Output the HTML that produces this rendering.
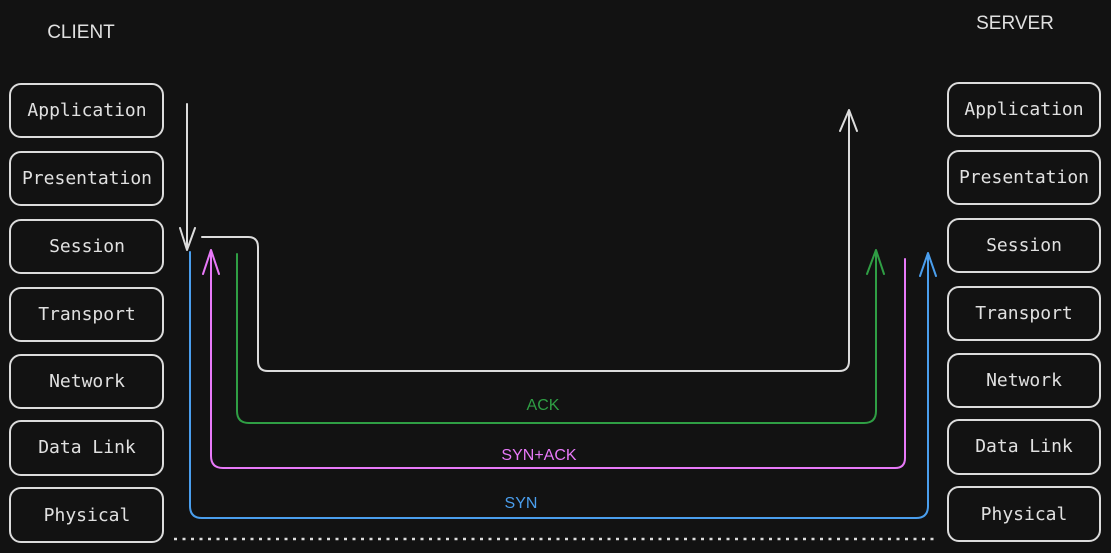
<!DOCTYPE html><html><head><style>body{margin:0;background:#121212}svg{display:block}text{font-family:"DejaVu Sans Mono","Liberation Mono",monospace}</style></head><body>
<svg width="1111" height="553" viewBox="0 0 1111 553" xmlns="http://www.w3.org/2000/svg">
<rect width="1111" height="553" fill="#121212"/>
<g font-size="19" fill="#e0e0e0">
<text x="81" y="38" text-anchor="middle" style="font-family:'Liberation Sans',sans-serif">CLIENT</text>
<text x="1015" y="29" text-anchor="middle" style="font-family:'Liberation Sans',sans-serif">SERVER</text>
</g>
<g fill="none" stroke="#dcdcdc" stroke-width="2">
<rect x="10" y="84" width="153" height="53" rx="11"/>
<rect x="10" y="152" width="153" height="53" rx="11"/>
<rect x="10" y="220" width="153" height="53" rx="11"/>
<rect x="10" y="288" width="153" height="53" rx="11"/>
<rect x="10" y="355" width="153" height="53" rx="11"/>
<rect x="10" y="421" width="153" height="54" rx="11"/>
<rect x="10" y="488" width="153" height="54" rx="11"/>
<rect x="948" y="83" width="152" height="53" rx="11"/>
<rect x="948" y="151" width="152" height="53" rx="11"/>
<rect x="948" y="219" width="152" height="53" rx="11"/>
<rect x="948" y="287" width="152" height="53" rx="11"/>
<rect x="948" y="354" width="152" height="53" rx="11"/>
<rect x="948" y="420" width="152" height="54" rx="11"/>
<rect x="948" y="487" width="152" height="54" rx="11"/>
</g>
<g font-size="18" fill="#e0e0e0" text-anchor="middle">
<text x="87" y="116">Application</text><text x="87" y="184">Presentation</text><text x="87" y="252">Session</text><text x="87" y="320">Transport</text><text x="87" y="387">Network</text><text x="87" y="453">Data Link</text><text x="87" y="521">Physical</text>
<text x="1024" y="115">Application</text><text x="1024" y="183">Presentation</text><text x="1024" y="251">Session</text><text x="1024" y="319">Transport</text><text x="1024" y="386">Network</text><text x="1024" y="452">Data Link</text><text x="1024" y="520">Physical</text>
</g>
<g fill="none" stroke-width="2" stroke-linecap="round" stroke-linejoin="round">
<path d="M187 104V250M180 228L187 250L195 228" stroke="#dcdcdc"/>
<path d="M202 237H248Q258 237 258 247V361Q258 371 268 371H839Q849 371 849 361V110M840 131L849 110L857 131" stroke="#dcdcdc"/>
<path d="M237 254V411Q237 423 249 423H864Q876 423 876 411V250M867 274L876 250L884 274" stroke="#2f9e44"/>
<path d="M905 259V458Q905 468 895 468H223Q211 468 211 456V250M203 274L211 250L219 274" stroke="#e879f9"/>
<path d="M928 253V506Q928 518 916 518H202Q190 518 190 506V252M920 276L928 253L936 276" stroke="#4a9eed"/>
</g>
<path d="M174 539H937" stroke="#dcdcdc" stroke-width="2.5" stroke-dasharray="3 5.5" fill="none"/>
<g font-size="16" text-anchor="middle">
<text x="543" y="410" fill="#2f9e44" style="font-family:'Liberation Sans',sans-serif">ACK</text>
<text x="539" y="460" fill="#e879f9" style="font-family:'Liberation Sans',sans-serif">SYN+ACK</text>
<text x="521" y="508" fill="#4a9eed" style="font-family:'Liberation Sans',sans-serif">SYN</text>
</g>
</svg></body></html>
